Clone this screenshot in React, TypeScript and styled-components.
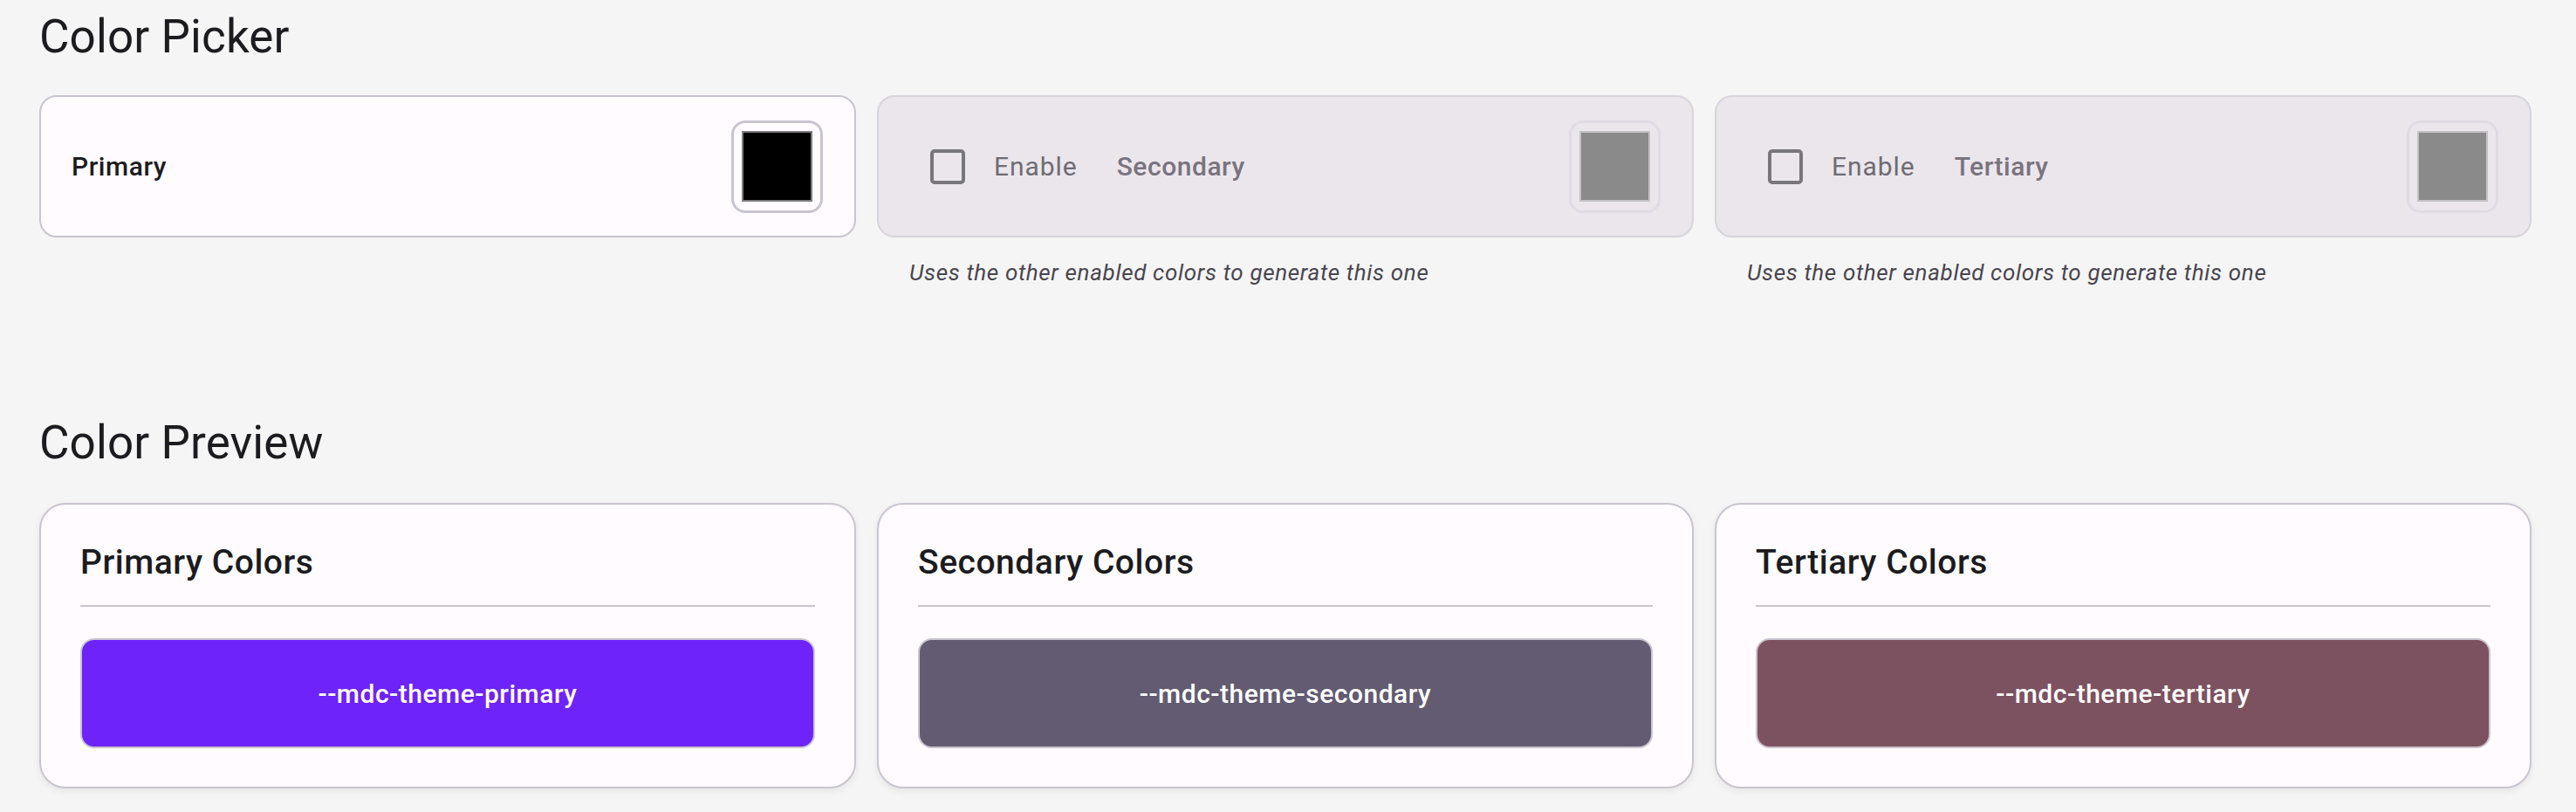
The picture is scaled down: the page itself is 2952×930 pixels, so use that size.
import React from "react";
import styled, { createGlobalStyle } from "styled-components";

const GlobalStyle = createGlobalStyle`
  html, body {
    margin: 0;
    padding: 0;
    background: #f5f5f5;
  }
  body {
    font-family: Roboto, "Noto Sans", "Liberation Sans", sans-serif;
    color: #1c1b1f;
  }
  * { box-sizing: border-box; }
`;

const Page = styled.main`
  padding: 11px 51px 0 45px;
  min-height: 930px;
  background: #f5f5f5;
`;

const SectionTitle = styled.h2<{ $top: number }>`
  margin: ${(p) => p.$top}px 0 0 0;
  font-size: 53px;
  font-weight: 400;
  line-height: normal;
  letter-spacing: 0.1px;
  color: #1c1b1f;
`;

const Grid = styled.div<{ $top: number }>`
  display: grid;
  grid-template-columns: repeat(3, 1fr);
  gap: 24px;
  align-items: start;
  margin-top: ${(p) => p.$top}px;
`;

const PickerColumn = styled.div`
  display: flex;
  flex-direction: column;
`;

const PickerCard = styled.div<{ $disabled?: boolean }>`
  display: flex;
  align-items: center;
  height: 163px;
  padding: 0 36px 0 35px;
  border-radius: 20px;
  border: 2px solid ${(p) => (p.$disabled ? "#d8d4db" : "#cac4d0")};
  background: ${(p) => (p.$disabled ? "#ebe6ec" : "#fffbfe")};
`;

const Checkbox = styled.span`
  display: inline-block;
  width: 40px;
  height: 40px;
  margin-left: 24px;
  margin-right: 33px;
  border: 4px solid #77767b;
  border-radius: 5px;
  flex-shrink: 0;
`;

const EnableText = styled.span`
  font-size: 30px;
  font-weight: 400;
  letter-spacing: 0.03125em;
  color: #6f6c73;
  margin-right: 45px;
`;

const PickerLabel = styled.span<{ $disabled?: boolean }>`
  font-size: 30px;
  font-weight: 500;
  letter-spacing: 0.018em;
  color: ${(p) => (p.$disabled ? "#79737e" : "#1c1b1f")};
  flex: 1;
`;

const Swatch = styled.div<{ $disabled?: boolean }>`
  width: 105px;
  height: 106px;
  padding: 9px;
  border-radius: 16px;
  border: 3px solid ${(p) => (p.$disabled ? "#e0dbe2" : "#cac4d0")};
  display: flex;
  align-items: center;
  justify-content: center;
  flex-shrink: 0;
`;

const SwatchFill = styled.div<{ $color: string; $edge: string }>`
  width: 81px;
  height: 81px;
  background: ${(p) => p.$color};
  border: 2px solid ${(p) => p.$edge};
`;

const Hint = styled.p`
  margin: 25px 0 0 0;
  padding-left: 37px;
  font-size: 26px;
  font-style: italic;
  line-height: normal;
  letter-spacing: 0.025em;
  color: #49454f;
`;

const PreviewCard = styled.section`
  display: flex;
  flex-direction: column;
  padding: 43px 45px 44px 45px;
  border: 2px solid #cac4d0;
  border-radius: 30px;
  background: #fffbfe;
  box-shadow: 0 3px 8px rgba(0, 0, 0, 0.07);
`;

const PreviewHeading = styled.h3`
  margin: 0;
  font-size: 39px;
  font-weight: 500;
  line-height: normal;
  letter-spacing: 0.0135em;
  color: #1c1b1f;
`;

const Divider = styled.hr`
  margin: 26px 0 0 0;
  border: none;
  height: 2px;
  background: #cac4d0;
`;

const ColorBar = styled.div<{ $color: string }>`
  margin-top: 36px;
  height: 126px;
  border-radius: 16px;
  border: 2px solid #cac4d0;
  background: ${(p) => p.$color};
  display: flex;
  align-items: center;
  justify-content: center;
  color: #ffffff;
  font-size: 30px;
  font-weight: 500;
  letter-spacing: 0.017em;
`;

const pickers = [
  { name: "Primary", disabled: false, color: "#000000" },
  { name: "Secondary", disabled: true, color: "#8a8a8a" },
  { name: "Tertiary", disabled: true, color: "#8a8a8a" },
];

const previews = [
  { title: "Primary Colors", variable: "--mdc-theme-primary", color: "#6e23f9" },
  { title: "Secondary Colors", variable: "--mdc-theme-secondary", color: "#625b71" },
  { title: "Tertiary Colors", variable: "--mdc-theme-tertiary", color: "#7d5260" },
];

export default function App() {
  return (
    <>
      <GlobalStyle />
      <Page>
        <SectionTitle $top={0}>Color Picker</SectionTitle>
        <Grid $top={36}>
          {pickers.map((p) => (
            <PickerColumn key={p.name}>
              <PickerCard $disabled={p.disabled}>
                {p.disabled && (
                  <>
                    <Checkbox />
                    <EnableText>Enable</EnableText>
                  </>
                )}
                <PickerLabel $disabled={p.disabled}>{p.name}</PickerLabel>
                <Swatch $disabled={p.disabled}>
                  <SwatchFill
                    $color={p.color}
                    $edge={p.disabled ? "#c4c2c6" : "#7d7d7d"}
                  />
                </Swatch>
              </PickerCard>
              {p.disabled && (
                <Hint>Uses the other enabled colors to generate this one</Hint>
              )}
            </PickerColumn>
          ))}
        </Grid>
        <SectionTitle $top={149}>Color Preview</SectionTitle>
        <Grid $top={38}>
          {previews.map((p) => (
            <PreviewCard key={p.title}>
              <PreviewHeading>{p.title}</PreviewHeading>
              <Divider />
              <ColorBar $color={p.color}>{p.variable}</ColorBar>
            </PreviewCard>
          ))}
        </Grid>
      </Page>
    </>
  );
}
